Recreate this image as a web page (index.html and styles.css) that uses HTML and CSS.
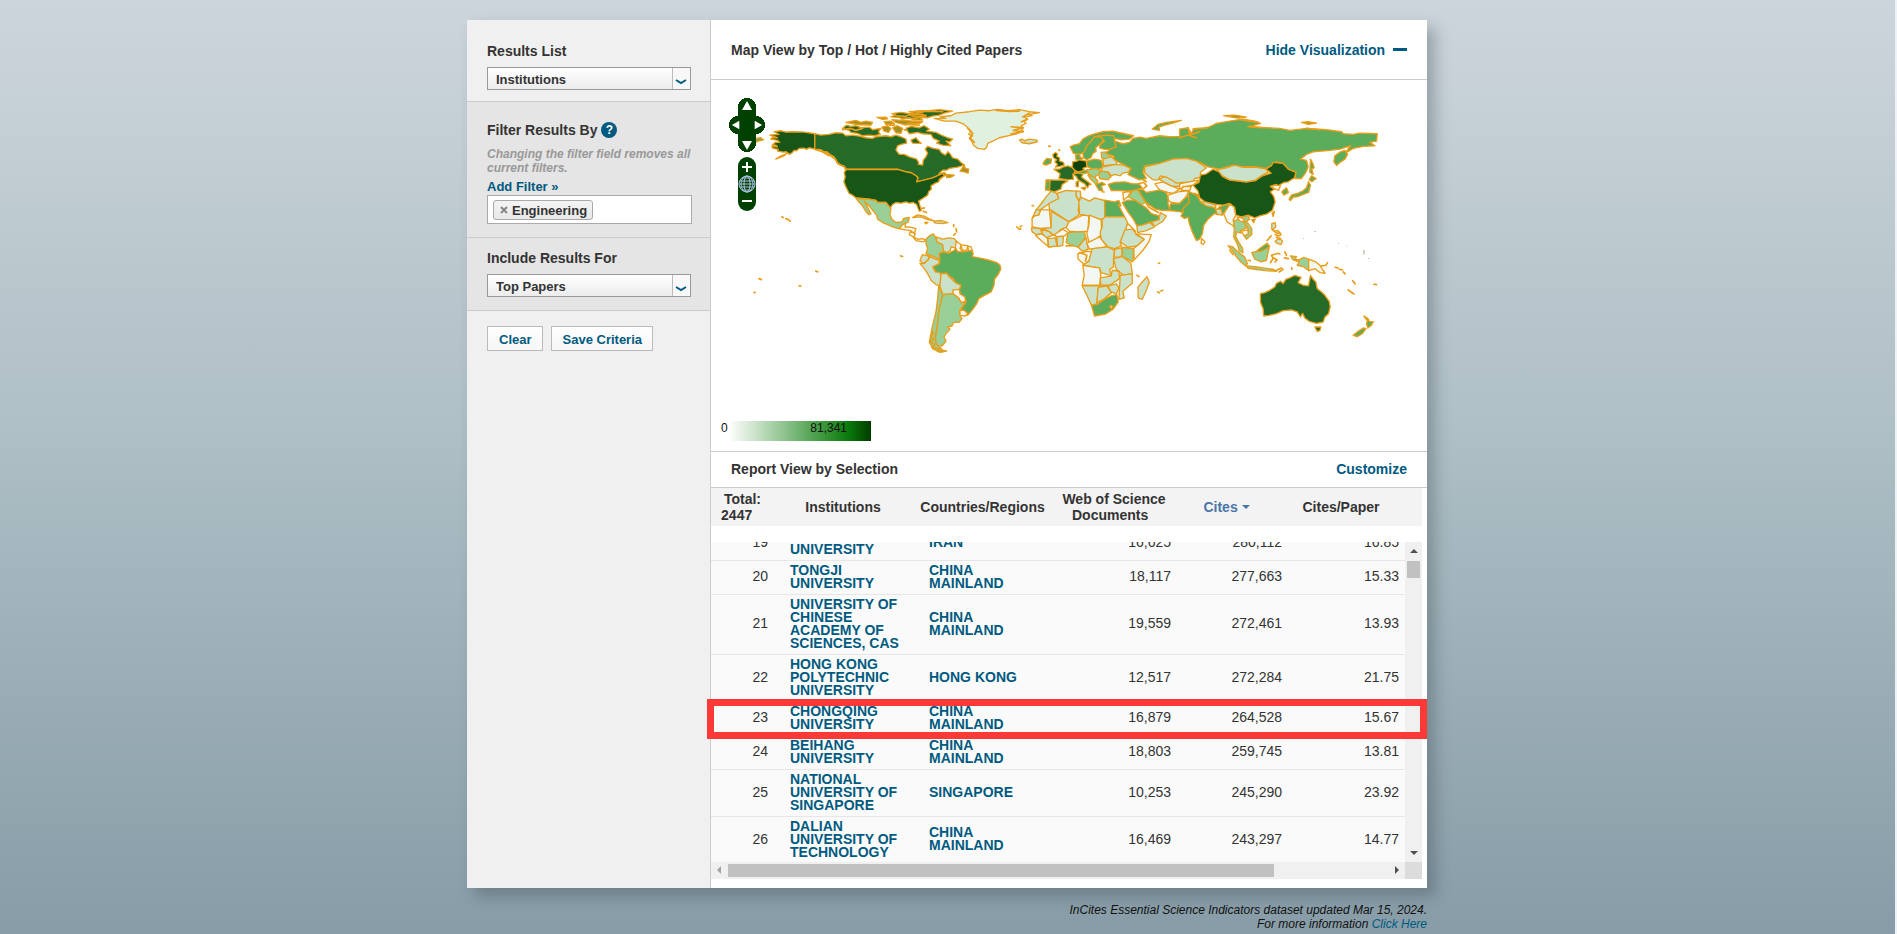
FILE: index.html
```html
<!DOCTYPE html>
<html lang="en">
<head>
  <meta charset="UTF-8">
  <title>InCites Essential Science Indicators</title>
  <link rel="stylesheet" href="styles.css">
</head>
<body>
  <div class="page">
    <div class="card">
      <aside class="sidebar">
        <section class="block first">
          <label for="resultsList">Results List</label>
          <div class="select">
            <select id="resultsList"><option>Institutions</option></select>
            <svg width="12" height="6" viewBox="0 0 12 6"><path d="M1 1 L6 4 L11 1" fill="none" stroke="#005a84" stroke-width="2"/></svg>
          </div>
        </section>

        <section class="block dark filter">
          <div class="title-row">
            <h2>Filter Results By</h2>
            <button class="help" aria-label="Help">?</button>
          </div>
          <p class="hint">Changing the filter field removes all current filters.</p>
          <a class="add" href="#">Add Filter »</a>
          <div class="tags">
            <span class="tag"><button aria-label="Remove Engineering"><svg width="8" height="8" viewBox="0 0 8 8"><path d="M1 1 L7 7 M7 1 L1 7" stroke="#888" stroke-width="2"/></svg></button>Engineering</span>
          </div>
        </section>

        <section class="block dark include">
          <label for="includeFor">Include Results For</label>
          <div class="select">
            <select id="includeFor"><option>Top Papers</option></select>
            <svg width="12" height="6" viewBox="0 0 12 6"><path d="M1 1 L6 4 L11 1" fill="none" stroke="#005a84" stroke-width="2"/></svg>
          </div>
        </section>

        <div class="actions">
          <button>Clear</button>
          <button>Save Criteria</button>
        </div>
      </aside>

      <main class="main">
        <header class="map-head">
          <h2>Map View by Top / Hot / Highly Cited Papers</h2>
          <a href="#">Hide Visualization <i></i></a>
        </header>

        <div class="map">
          <svg class="world" viewBox="6 -15 2145 1110" role="img" aria-label="World map of cited papers">
            <!-- americas -->
            <g>
              <path class="lv6" d="M182,150 L210,148 195,140 215,137 230,141 250,140 285,141 317,146 V192 L300,188 292,193 285,189 270,190 262,197 255,196 248,204 240,208 236,203 225,212 200,222 212,214 235,205 232,200 222,201 205,198 208,193 192,190 188,184 205,185 200,180 190,180 198,172 212,172 206,166 185,162 190,158 205,158Z"/>
              <path class="lv3" d="M142,160 155,158 163,164 150,167 140,172Z"/>
              <path class="lv5" d="M317,146 335,150 360,148 380,143 400,144 410,152 430,150 450,153 470,158 490,160 500,155 530,152 545,155 560,150 575,155 590,162 592,174 575,178 565,182 560,195 570,208 585,208 600,215 622,222 628,232 627,238 640,240 642,225 650,215 655,204 648,192 655,184 672,190 690,193 696,203 708,210 716,200 722,206 730,218 745,222 755,232 765,240 745,246 720,250 712,255 700,255 690,264 695,268 670,278 640,286 622,290 626,278 620,272 605,262 590,260 565,252 H412 L405,243 395,240 385,232 375,215 362,208 355,202 345,200 335,194 317,192Z"/>
              <path class="edge" d="M320,194 L340,200 352,200 365,212 378,222 385,235 405,245 412,258 M335,198 360,212"/>
              <path class="lv4" d="M752,258 L760,248 764,238 768,250 778,252 776,264 765,260Z M712,268 L735,270 725,276 712,277Z M688,268 L705,262 712,268 700,275 690,285Z"/>
              <path class="lv5" d="M400,130 L412,120 425,124 440,122 455,128 480,126 490,134 515,130 508,140 513,148 495,152 480,150 460,152 445,145 425,142 420,136Z"/>
              <path class="lv4" d="M410,112 L440,106 455,112 470,108 490,112 485,120 450,119 432,116Z M503,97 L530,96 535,101 520,103Z M525,110 L545,108 555,116 530,118Z M518,126 L535,122 545,130 538,142 525,138Z M550,128 L565,122 580,130 575,145 560,143Z"/>
              <path class="lv5" d="M545,95 L560,90 548,86 575,82 600,86 620,78 660,77 690,74 730,78 705,84 690,90 670,93 655,98 630,97 640,105 612,104 600,98 580,102 570,97Z"/>
              <path class="lv4" d="M548,104 L580,106 640,110 632,115 600,114 590,120 560,112Z M600,90 L640,88 650,92 620,96Z"/>
              <path class="edge" d="M560,92 L590,94 600,88 640,82 M575,100 L620,100 650,92 M600,80 L640,78 700,80 M400,134 L425,130 440,136 460,130 M540,120 L556,120 M590,118 L630,120 M585,134 L600,138"/>
              <path class="lv5" d="M590,130 L605,124 630,128 645,122 660,132 652,138 680,142 700,152 715,158 730,162 722,170 710,168 724,182 700,180 682,174 690,168 672,160 665,148 640,146 625,142 600,146Z M605,165 L620,158 628,168 636,175 610,174Z"/>
              <path class="ice" d="M675,100 L710,100 692,95 725,92 740,84 780,80 810,75 840,77 865,73 895,77 930,74 960,80 990,83 965,87 955,88 968,92 945,96 955,103 943,108 950,115 935,122 942,128 936,135 942,139 922,146 905,150 870,158 850,168 835,175 832,186 825,193 805,190 792,180 788,170 780,160 790,152 778,148 785,138 775,128 765,118 740,108 705,108Z"/>
              <path class="edge" d="M775,130 L790,145 782,158 795,172 M905,125 L940,128 912,136 942,140 905,146 M940,96 L960,84 M936,110 L950,104 M860,76 L900,79 930,78"/>
              <path class="lv1" d="M930,165 L938,162 945,167 960,162 982,165 984,170 960,176 938,173Z"/>
              <path class="lv6" d="M412,253 H565 L590,260 605,263 620,272 626,278 622,290 640,286 670,278 688,270 700,265 705,272 690,282 688,290 678,294 665,302 666,312 658,320 655,330 640,340 628,348 633,365 636,376 630,378 622,358 612,352 600,354 590,350 575,354 560,352 550,358 543,368 530,352 505,352 500,346 480,342 460,340 440,338 430,330 420,325 410,305 404,290 408,275 405,262Z"/>
              <path class="lv2" d="M440,338 L460,342 480,342 500,346 505,352 530,352 538,362 545,370 542,388 548,402 560,412 578,410 583,400 600,397 597,410 580,420 578,428 568,430 550,425 535,418 520,412 505,402 502,390 490,375 478,360 465,348 475,366 485,386 478,388 468,376 460,362 448,350Z"/>
              <path class="lv0" d="M580,418 L588,414 588,426 600,425 620,430 615,445 604,436 588,434 570,430Z M604,438 L618,445 614,456 600,448Z M612,456 L625,462 640,460 652,466 640,470 620,466Z"/>
              <path class="lv1" d="M610,397 L625,389 645,393 658,400 672,406 655,403 635,395Z M672,408 L695,406 716,412 700,415 678,414Z M646,412 L656,412 650,416Z"/>
              <path class="edge" d="M636,370 L645,368 M642,378 L652,382 M733,418 V424 M740,430 L742,440 M738,445 733,450"/>
              <path class="lv2" d="M650,462 L660,452 672,446 678,455 683,470 700,478 703,498 690,505 693,525 675,515 650,505 655,490 650,475Z"/>
              <path class="lv1" d="M680,455 L700,462 718,458 735,460 745,472 738,488 725,485 722,498 712,502 703,498 700,478 683,470Z"/>
              <path class="lv0" d="M740,468 L755,478 752,490 762,500 745,500 738,488Z M755,478 L775,482 772,496 758,494Z M775,482 L785,485 790,498 778,498Z"/>
              <path class="lv3" d="M692,525 L690,505 703,500 718,504 735,495 738,488 745,500 762,500 785,496 792,505 788,514 820,520 840,525 862,532 872,540 874,552 866,568 855,582 854,600 845,620 825,630 808,640 802,655 790,672 775,690 765,678 755,670 768,655 770,648 765,635 752,628 750,612 755,600 738,592 732,580 718,572 712,564 695,565 680,560 670,545 678,538 690,535Z"/>
              <path class="lv1" d="M640,508 L660,513 658,522 645,535 632,528 636,515Z"/>
              <path class="lv1" d="M660,513 L675,520 690,525 690,535 670,545 678,560 692,562 695,570 692,602 680,598 665,585 655,565 645,550 632,535 645,535 658,522Z"/>
              <path class="lv1" d="M695,565 L712,564 718,572 738,592 755,600 750,612 732,614 730,625 700,628 692,602Z"/>
              <path class="lv0" d="M732,614 L750,612 752,626 766,634 769,648 755,652 748,638 730,625Z"/>
              <path class="lv2" d="M700,628 L730,625 748,638 755,652 768,650 752,675 752,692 758,700 750,710 732,712 728,722 715,725 722,732 712,742 704,755 710,768 698,782 680,782 678,760 684,720 688,680 694,650Z"/>
              <path class="lv0" d="M752,675 L765,675 775,685 768,692 752,690Z"/>
              <path class="lv2" d="M688,603 L695,615 700,630 694,650 688,680 684,720 678,750 680,775 692,786 700,794 712,797 692,801 670,790 660,770 664,750 670,720 680,680 685,640Z"/>
              <path class="edge" d="M668,735 L672,745 664,752 674,762 662,768 676,778 670,786 690,790 684,796 700,798"/>
              <path class="edge" d="M218,395 L222,397 M230,400 L234,402 M236,402 L243,408 M574,512 L580,514 M150,580 L157,583 M320,557 L326,560 M270,602 H275 M135,621 L138,622 M922,425 L926,428 M932,425 L936,422 M928,432 934,431"/>
            </g>

            <!-- europe, africa, middle east -->
            <g transform="translate(870)">
              <path class="lv3" d="M212,185 L222,180 240,176 250,162 262,155 280,148 310,140 340,138 375,146 402,152 390,162 365,164 345,160 325,150 300,152 285,155 275,168 262,182 255,200 240,208 222,205Z"/>
              <path class="lv3" d="M250,205 L256,196 262,182 275,168 285,155 305,155 312,165 300,178 288,188 290,198 280,205 274,218 262,224 252,218Z"/>
              <path class="lv3" d="M300,153 L325,150 342,152 345,165 352,182 335,194 312,192 300,188 302,178 315,168 308,160Z"/>
              <path class="lv3" d="M228,210 L240,206 242,216 250,220 240,226 230,224Z"/>
              <path class="lv2" d="M305,202 L328,200 330,212 342,218 320,222 306,218Z"/>
              <path class="lv6" d="M160,208 L168,202 174,206 172,214 180,218 180,228 192,232 194,240 180,244 168,246 174,238 166,230 172,224 162,218Z"/>
              <path class="lv3" d="M135,228 L142,220 156,222 154,234 140,240 131,237Z"/>
              <path class="lv5" d="M163,252 L180,252 190,246 205,242 220,248 228,258 220,270 222,282 205,284 178,280 182,266Z"/>
              <path class="lv5" d="M140,284 L188,285 204,288 188,298 184,312 165,320 140,314 142,298Z"/>
              <path class="lv3" d="M140,286 L152,288 150,314 138,314Z"/>
              <path class="lv7" d="M220,230 L232,228 240,224 260,228 262,245 250,250 256,258 235,260 226,256 218,246Z"/>
              <path class="lv3" d="M262,228 L285,222 306,226 310,245 300,252 275,250 262,244Z"/>
              <path class="lv5" d="M220,266 L240,262 250,268 246,276 262,288 275,298 268,300 264,308 256,296 236,284 230,274Z M245,308 L258,306 256,314Z M230,290 L237,288 236,305 230,304Z"/>
              <path class="lv3" d="M225,260 L235,260 256,256 272,254 270,262 250,266 235,264Z"/>
              <path class="lv2" d="M262,254 L290,250 305,258 298,268 285,275 268,268Z M265,270 L285,275 295,288 290,298 272,280Z"/>
              <path class="lv2" d="M305,258 L325,260 334,275 325,284 300,280 298,268Z"/>
              <path class="lv3" d="M288,298 L308,292 318,298 305,302 310,318 298,315Z M306,320 L316,321"/>
              <path class="lv1" d="M310,222 L335,215 352,230 350,238 312,242Z"/>
              <path class="lv1" d="M310,245 L350,238 372,240 392,248 388,260 370,264 362,272 345,268 335,272 325,260 305,258Z"/>
              <path class="lv3" d="M326,298 L345,292 375,290 400,296 418,296 428,308 410,314 385,318 360,316 335,316Z"/>
              <path class="lv2" d="M385,334 L400,316 415,314 425,330 438,352 425,358 405,345Z"/>
              <path class="lv0" d="M370,322 L395,318 385,334 372,345Z"/>
              <path class="lv3" d="M415,312 L430,314 440,322 462,318 480,314 500,322 506,340 505,358 512,376 490,376 468,372 450,360 440,352 425,330Z"/>
              <path class="edge" d="M415,296 L432,292 442,302 430,312 M430,284 L440,290 M440,355 L448,366 465,376 476,382"/>
              <path class="lv3" d="M368,352 L385,345 405,345 425,358 440,368 455,385 478,392 478,404 450,412 428,420 412,422 400,400 385,380Z"/>
              <path class="lv1" d="M412,422 L428,420 450,412 460,415 464,426 440,436 414,442Z M450,412 L478,404 482,382 500,392 490,408 464,424Z"/>
              <path class="lv0" d="M466,296 L490,290 515,302 540,312 520,325 505,322 480,314Z"/>
              <path class="lv1" d="M478,282 L500,272 520,284 545,288 548,300 532,304 515,302 492,290Z"/>
              <path class="lv0" d="M505,330 L535,320 570,316 555,340 540,355 515,352 506,345Z"/>
              <path class="lv3" d="M510,376 L512,356 540,355 555,340 568,330 585,324 600,332 580,352 572,372 568,390 556,394 545,380Z"/>
              <path class="lv3" d="M458,132 L475,118 500,112 545,106 520,114 495,120 478,126 480,136Z"/>

              <path class="lv1" d="M155,318 L172,325 178,340 150,355 122,374 110,374 128,352 140,335Z"/>
              <path class="lv1" d="M98,400 L110,374 124,374 118,390 106,392Z"/>
              <path class="lv0" d="M98,400 L106,392 118,390 124,374 150,374 155,428 122,430 98,424Z"/>
              <path class="lv1" d="M172,325 L200,316 232,318 230,332 240,350 236,375 240,388 208,410 150,372 148,355 178,340Z"/>
              <path class="lv1" d="M230,318 L242,318 244,334 237,346 230,332Z"/>
              <path class="lv1" d="M244,336 L270,348 285,338 315,346 316,402 300,402 255,390 240,388 238,350Z"/>
              <path class="lv3" d="M316,345 L345,350 358,346 364,362 356,358 375,394 316,395Z"/>
              <path class="lv1" d="M155,378 L208,410 204,425 185,432 165,452 150,440 130,430 155,428Z"/>
              <path class="lv0" d="M208,410 L250,390 268,392 265,438 235,440 210,438 200,428Z"/>
              <path class="lv0" d="M270,390 L305,404 306,430 302,452 285,465 268,470 262,445 268,420Z"/>
              <path class="lv1" d="M316,395 L375,395 384,412 378,440 362,470 366,482 345,490 325,485 305,462 302,440 308,425 308,404Z"/>
              <path class="lv0" d="M384,414 L408,438 398,434 378,434Z"/>
              <path class="lv1" d="M376,434 L400,432 410,448 434,462 412,482 385,486 362,470Z"/>
              <path class="lv0" d="M410,446 L455,448 448,470 430,495 404,524 402,490 415,480 434,462Z"/>
              <path class="lv2" d="M205,442 L230,440 255,440 258,456 248,470 235,486 215,480 200,472Z"/>
              <path class="lv1" d="M96,428 L122,430 128,445 110,448 98,440Z M128,432 L150,440 160,450 140,458 128,445Z M145,460 L168,458 172,482 148,486Z M172,454 L192,454 190,480 174,484Z"/>
              <path class="lv0" d="M108,450 L128,446 144,460 146,484 125,466Z M165,448 L190,432 206,442 195,452 170,454Z"/>
              <path class="lv1" d="M236,486 L250,468 260,458 266,492 248,498Z"/>
              <path class="lv0" d="M262,474 L300,455 322,484 300,488 270,492Z"/>
              <path class="lv0" d="M235,506 L262,498 276,500 270,525 255,538 236,522Z"/>
              <path class="edge" d="M240,502 L262,510 258,528 M200,482 L222,481"/>
              <path class="lv1" d="M278,490 L325,485 345,496 342,520 342,545 330,552 335,572 305,562 300,548 278,545 250,540 268,528Z"/>
              <path class="lv1" d="M345,492 L366,488 368,508 362,516 344,515Z"/>
              <path class="lv2" d="M368,486 L402,490 400,530 368,514Z"/>
              <path class="lv1" d="M342,520 L368,514 394,534 398,566 372,570 350,552Z"/>
              <path class="lv0" d="M250,540 L278,545 300,548 304,570 300,600 248,600 254,570Z"/>
              <path class="lv1" d="M302,578 L335,572 338,555 358,558 360,580 330,600 304,600Z"/>
              <path class="lv1" d="M362,570 L398,566 398,594 370,618 374,638 358,642 360,604Z"/>
              <path class="lv1" d="M326,602 L350,596 358,608 350,626 332,618Z"/>
              <path class="lv1" d="M248,602 L310,602 296,608 292,656 276,660 262,630Z"/>
              <path class="lv1" d="M296,606 L322,602 336,622 312,642 292,652Z"/>
              <path class="lv3" d="M276,660 L292,658 310,645 334,632 352,628 356,650 340,672 318,686 285,692Z"/>
              <path class="lv0" d="M330,664 L336,660 340,666 334,670Z"/>
              <path class="lv1" d="M415,606 L428,590 442,574 449,592 438,620 428,642 416,638Z"/>
              <path class="edge" d="M412,570 L418,574 M474,620 L479,622 M484,617 L489,615 M98,361 L102,362 M148,183 L152,184 M178,194 L180,196 M476,534 H480"/>
            </g>

            <!-- asia, oceania -->
            <g transform="translate(1410)">
              <path class="lv3" d="M-195,168 L-170,176 -150,172 -140,160 -120,156 -100,160 -60,152 -30,155 0,154 0,132 25,128 30,150 45,130 70,130 90,125 110,115 150,108 190,102 225,108 242,115 210,125 260,128 300,130 330,136 380,130 440,134 485,140 490,146 520,148 540,144 592,146 590,168 570,172 585,182 550,184 520,190 495,205 512,182 480,192 450,196 400,200 380,208 362,222 380,226 385,245 378,262 365,280 345,280 348,262 325,252 310,235 290,230 275,242 258,250 230,245 190,245 160,240 120,252 85,245 60,232 20,220 -20,222 -60,235 -105,242 -110,262 -100,280 -120,284 -140,275 -155,268 -146,250 -175,235 -195,225 -198,212 -222,205 -205,190 -190,186Z"/>
              <path class="edge" d="M0,158 L25,150 50,158 M25,128 L35,148 60,140 M40,132 L85,128 M180,104 L235,112 M205,124 L245,128 M380,130 L420,134"/>
              <path class="lv3" d="M465,212 L482,200 495,196 503,208 495,222 480,232 470,241 462,230Z"/>
              <path class="lv4" d="M132,92 L165,90 200,96 175,99 150,95Z M365,112 L385,110 410,114 385,118Z"/>
              <path class="lv1" d="M-105,245 L-60,235 -20,222 20,220 50,228 62,236 80,248 62,262 66,276 45,280 40,290 10,292 -10,294 -25,284 -40,276 -58,272 -64,284 -80,284 -95,272 -105,262Z"/>
              <path class="lv0" d="M0,296 L40,288 62,284 40,300 15,304 0,312Z M10,304 L35,304 30,316 5,316Z"/>
              <path class="lv1" d="M110,254 L140,248 165,240 190,247 230,247 262,252 264,262 245,272 225,286 200,290 150,284 128,272Z"/>
              <path class="lv6" d="M40,300 L58,292 62,270 80,266 100,252 118,260 128,274 150,285 200,291 228,286 248,272 274,264 258,252 275,242 280,232 310,235 325,252 348,262 344,278 325,290 312,292 295,302 288,298 272,304 284,312 272,320 282,334 286,350 278,375 262,386 240,392 225,398 205,390 185,395 168,390 165,368 150,355 130,360 110,358 75,350 60,338 55,318Z"/>
              <path class="lv4" d="M216,404 L226,402 222,412Z M277,384 L284,378 280,394Z"/>
              <path class="lv0" d="M272,304 L290,300 302,302 296,316Z"/>
              <path class="lv3" d="M306,320 L320,308 326,322 312,330Z"/>
              <path class="lv3" d="M328,342 L335,330 355,324 368,318 380,308 386,290 392,300 386,322 370,328 355,334 340,336 332,346Z M388,284 L395,272 409,280 396,290Z M392,222 L399,235 403,248 396,252 400,268 390,262Z"/>
              <path class="lv3" d="M25,318 L50,330 62,348 75,358 105,368 110,376 118,366 138,358 154,358 140,372 130,388 112,388 105,384 85,402 72,420 68,445 60,462 50,466 38,440 28,412 26,396 14,400 4,392 12,380 8,372 28,352Z"/>
              <path class="lv1" d="M62,350 L75,350 108,360 108,368 80,362Z M108,372 L124,372 128,390 112,386Z"/>
              <path class="lv0" d="M66,460 L76,470 70,478 64,474Z"/>
              <path class="lv0" d="M132,386 L150,358 163,365 168,392 160,405 166,430 158,420 142,410Z"/>
              <path class="lv2" d="M162,408 L175,402 195,412 200,428 182,436 184,444 170,440 168,455 180,476 188,488 190,502 178,496 174,480 162,455 164,430Z"/>
              <path class="lv2" d="M186,396 L205,392 210,402 200,408 216,430 216,448 200,462 192,450 208,440 202,424 190,408Z"/>
              <path class="lv0" d="M184,438 L204,434 206,446 194,452Z M172,396 L188,398 196,410 180,408Z"/>
              <path class="lv2" d="M145,482 L158,484 175,500 195,515 203,535 198,542 185,532 170,515 158,496Z"/>
              <path class="lv2" d="M200,542 L225,544 250,548 280,552 290,558 255,556 205,549Z"/>
              <path class="lv2" d="M216,502 L235,498 248,490 268,488 264,505 260,525 245,530 225,522Z"/>
              <path class="lv3" d="M232,496 L248,484 262,474 270,484 255,492 240,500Z"/>
              <path class="lv1" d="M276,415 L286,412 288,425 280,432 284,438 294,436 302,444 292,444 284,440 276,432Z M286,468 L300,458 308,468 304,478 290,474Z"/>
              <path class="edge" d="M262,466 L274,452 M286,448 L296,452 304,448 M290,456 L300,462 M275,510 L295,504 300,506 M276,512 L280,520 272,532 M282,518 L292,524 286,530 M315,500 L320,510 M314,518 L326,520 M298,560 L310,552 M305,548 L290,555 M336,548 V552 M150,495 L160,508 M205,525 L212,526"/>
              <path class="lv2" d="M332,512 L350,514 345,522 358,524 372,516 386,522 387,556 372,545 352,540 358,530 340,524Z"/>
              <path class="lv0" d="M386,522 L408,530 420,540 436,564 420,562 405,550 387,556Z"/>
              <path class="edge" d="M424,542 L438,540 443,532 M466,546 L474,548 M478,552 L488,554 M490,560 L496,566 M518,586 L526,596 M505,614 L522,626 M582,597 L590,598"/>
              <path class="speck" d="M370,460 H372 M404,438 L408,440 M476,474 V476 M500,482 H502 M552,494 V508 M565,520 H568"/>
              <path class="lv5" d="M242,625 L255,622 270,615 285,605 290,594 302,588 310,595 318,582 330,578 345,570 364,576 355,592 370,600 386,602 392,570 400,582 408,590 412,610 425,620 435,630 448,648 451,665 446,685 435,695 430,710 410,714 388,708 375,698 368,684 362,695 352,680 335,674 310,676 290,685 268,690 252,692 250,670 242,650Z"/>
              <path class="lv5" d="M405,725 L423,725 420,736 412,738Z"/>
              <path class="lv3" d="M552,692 L564,700 568,708 580,710 574,720 564,728 560,716 562,706Z M520,750 L535,738 550,728 558,730 548,744 532,754Z"/>
            </g>
          </svg>

          <div class="controls">
            <div class="pan">
              <button class="up" aria-label="Pan up"><svg viewBox="0 0 12 12"><path d="M6 1 L11 10 H1Z"/></svg></button>
              <button class="left" aria-label="Pan left"><svg viewBox="0 0 12 12"><path d="M1 6 L10 1 V11Z"/></svg></button>
              <button class="right" aria-label="Pan right"><svg viewBox="0 0 12 12"><path d="M11 6 L2 1 V11Z"/></svg></button>
              <button class="down" aria-label="Pan down"><svg viewBox="0 0 12 12"><path d="M6 11 L11 2 H1Z"/></svg></button>
            </div>
            <div class="zoom">
              <button aria-label="Zoom in"><svg viewBox="0 0 18 18"><path d="M8 5 H10 V9 H14 V11 H10 V15 H8 V11 H4 V9 H8Z"/></svg></button>
              <button aria-label="Whole world"><svg viewBox="0 0 18 18"><g fill="none" stroke="#a9bfe0"><circle cx="9" cy="9" r="8"/><ellipse cx="9" cy="9" rx="3" ry="8"/><ellipse cx="9" cy="9" rx="6" ry="8"/><path d="M1 9 H17 M2 6 H16 M2 12 H16 M4 3 H14 M4 15 H14"/></g></svg></button>
              <button aria-label="Zoom out"><svg viewBox="0 0 18 18"><path d="M4 7 H14 V9 H4Z"/></svg></button>
            </div>
          </div>

          <div class="legend"><span>0</span><span>81,341</span></div>
        </div>

        <header class="report-head">
          <h2>Report View by Selection</h2>
          <a href="#">Customize</a>
        </header>

        <div class="report">
          <table class="heads">
            <colgroup><col class="h1"><col class="h2"><col class="h3"><col class="h4"><col class="h5"><col class="h6"><col></colgroup>
            <thead>
              <tr>
                <th>Total: 2447&nbsp;&nbsp;&nbsp;</th>
                <th>Institutions</th>
                <th>Countries/Regions</th>
                <th>Web of Science Documents&nbsp;&nbsp;</th>
                <th class="sorted"><a href="#">Cites <i></i></a></th>
                <th>Cites/Paper</th>
                <td></td>
              </tr>
            </thead>
          </table>

          <div class="scroller">
            <div class="rows">
              <table class="data">
                <colgroup><col class="c1"><col class="c2"><col class="c3"><col class="c4"><col class="c5"><col></colgroup>
                <tbody>
                  <tr><td>19</td><td><a href="#">ISLAMIC AZAD UNIVERSITY</a></td><td><a href="#">IRAN</a></td><td>16,625</td><td>280,112</td><td>16.85</td></tr>
                  <tr><td>20</td><td><a href="#">TONGJI UNIVERSITY</a></td><td><a href="#">CHINA MAINLAND</a></td><td>18,117</td><td>277,663</td><td>15.33</td></tr>
                  <tr><td>21</td><td><a href="#">UNIVERSITY OF CHINESE ACADEMY OF SCIENCES, CAS</a></td><td><a href="#">CHINA MAINLAND</a></td><td>19,559</td><td>272,461</td><td>13.93</td></tr>
                  <tr><td>22</td><td><a href="#">HONG KONG POLYTECHNIC UNIVERSITY</a></td><td><a href="#">HONG KONG</a></td><td>12,517</td><td>272,284</td><td>21.75</td></tr>
                  <tr><td>23</td><td><a href="#">CHONGQING UNIVERSITY</a></td><td><a href="#">CHINA MAINLAND</a></td><td>16,879</td><td>264,528</td><td>15.67</td></tr>
                  <tr><td>24</td><td><a href="#">BEIHANG UNIVERSITY</a></td><td><a href="#">CHINA MAINLAND</a></td><td>18,803</td><td>259,745</td><td>13.81</td></tr>
                  <tr><td>25</td><td><a href="#">NATIONAL UNIVERSITY OF SINGAPORE</a></td><td><a href="#">SINGAPORE</a></td><td>10,253</td><td>245,290</td><td>23.92</td></tr>
                  <tr><td>26</td><td><a href="#">DALIAN UNIVERSITY OF TECHNOLOGY</a></td><td><a href="#">CHINA MAINLAND</a></td><td>16,469</td><td>243,297</td><td>14.77</td></tr>
                </tbody>
              </table>
            </div>
            <div class="vbar"><i class="arrow-up"></i><b></b><i class="arrow-down"></i></div>
            <div class="hbar"><i class="arrow-left"></i><b></b><i class="arrow-right"></i></div>
            <div class="corner"></div>
          </div>

          <div class="highlight"></div>
        </div>
      </main>
    </div>

    <footer>
      InCites Essential Science Indicators dataset updated Mar 15, 2024.<br>
      For more information <a href="#">Click Here</a>
    </footer>
  </div>
</body>
</html>
```
FILE: styles.css
```css
* {
  box-sizing: border-box;
}

html {
  background: #eff2f5;
}

body {
  margin: 0 2px 0 0;
  padding: 20px 1px 4px 0;
  min-height: 100vh;
  font-family: Arial, "Liberation Sans", sans-serif;
  font-size: 14px;
  color: #333;
  background: linear-gradient(#cdd5dc, #afc0c6 45%, #879ca7);
}

a {
  color: #005a7f;
  text-decoration: none;
}

h2 {
  margin: 0;
  font-size: 14px;
  line-height: 16px;
}

button {
  font-family: inherit;
  padding: 0;
  border: 0;
  background: none;
  cursor: pointer;
}

.page {
  max-width: 960px;
  margin: 0 auto;
}

.card {
  display: flex;
  background: #fff;
  box-shadow: 8px 8px 14px rgba(40, 50, 55, 0.3);
}

/* sidebar */
.sidebar {
  flex: 0 0 244px;
  background: #f0f0f0;
  border-right: 1px solid #ccc;
}

.block {
  padding: 0 18px 0 20px;
  border-bottom: 1px solid #ccc;
}

.block.first {
  padding-top: 23px;
  padding-bottom: 11px;
}

.block.dark {
  background: #e5e5e5;
}

.block.filter {
  padding-top: 20px;
  padding-bottom: 13px;
}

.block.include {
  padding-top: 12px;
  padding-bottom: 13px;
}

.block label {
  display: block;
  font-weight: bold;
  line-height: 16px;
  margin-bottom: 8px;
}

.select {
  position: relative;
}

.select select {
  appearance: none;
  display: block;
  width: 204px;
  height: 23px;
  padding: 1px 8px 0;
  border: 1px solid #999;
  border-radius: 0;
  background: linear-gradient(90deg, transparent 184px, #bbb 184px, #bbb 185px, #f8f8f8 185px), linear-gradient(#fff, #ececec);
  font: bold 13px Arial, "Liberation Sans", sans-serif;
  color: #333;
}

.select svg {
  position: absolute;
  left: 188px;
  top: 12px;
  pointer-events: none;
}

.title-row {
  display: flex;
  align-items: center;
  gap: 4px;
}

.help {
  width: 16px;
  height: 16px;
  border-radius: 50%;
  background: #005a7f;
  color: #fff;
  font-size: 12px;
  font-weight: bold;
  line-height: 16px;
}

.hint {
  margin: 9px 0 4px;
  font-size: 12px;
  font-weight: bold;
  font-style: italic;
  line-height: 14px;
  color: #999;
}

.add {
  display: block;
  font-size: 13px;
  font-weight: bold;
  line-height: 16px;
}

.tags {
  width: 205px;
  height: 29px;
  padding: 4px 5px;
  border: 1px solid #aaa;
  background: #fff;
}

.tag {
  display: inline-flex;
  align-items: center;
  height: 20px;
  padding: 0 5px 0 6px;
  border: 1px solid #aaa;
  border-radius: 3px;
  background: linear-gradient(#f4f4f4, #e8e8e8);
  font-size: 13px;
  font-weight: bold;
}

.tag button {
  display: flex;
  margin-right: 4px;
}

.actions {
  display: flex;
  gap: 8px;
  padding: 15px 20px;
}

.actions button {
  height: 25px;
  padding: 1px 10px 0 11px;
  border: 1px solid #bbb;
  background: linear-gradient(#fff, #f6f6f6);
  color: #005a7f;
  font-size: 13px;
  font-weight: bold;
}

/* map */
.main {
  flex: 1;
  min-width: 0;
  padding-bottom: 9px;
}

.map-head,
.report-head {
  display: flex;
  justify-content: space-between;
  align-items: center;
  padding: 0 20px;
  border-bottom: 1px solid #ccc;
  font-weight: bold;
}

.map-head {
  height: 60px;
}

.map-head i {
  display: inline-block;
  width: 14px;
  height: 3px;
  margin-left: 4px;
  vertical-align: 4px;
  background: #005a7f;
}

.map {
  position: relative;
  border-bottom: 1px solid #ccc;
}

.world {
  display: block;
  width: 100%;
}

.world path {
  stroke: #e99d18;
  stroke-width: 4;
  stroke-linejoin: round;
}

.world .edge { fill: none; stroke-width: 5; stroke-linecap: round; }
.world .speck { fill: none; stroke: #a8b080; stroke-width: 3; }
.world .ice { fill: #e0f1e0; }
.world .lv0 { fill: #f4f8f4; }
.world .lv1 { fill: #c9e2c9; }
.world .lv2 { fill: #98d098; }
.world .lv3 { fill: #5bac5b; }
.world .lv4 { fill: #a09025; }
.world .lv5 { fill: #256a26; }
.world .lv6 { fill: #185617; }
.world .lv7 { fill: #0b440b; }

.controls {
  position: absolute;
  left: 18px;
  top: 18px;
  width: 36px;
}

.controls svg {
  display: block;
  width: 100%;
  fill: #fff;
}

.pan {
  display: grid;
  grid-template: 12px 30px 12px / 12px 12px 12px;
  align-items: center;
  background:
    radial-gradient(circle at 9px 9px, #004000 9px, transparent 9px) 9px 0 / 18px 18px no-repeat,
    radial-gradient(circle at 9px 9px, #004000 9px, transparent 9px) 9px 36px / 18px 18px no-repeat,
    radial-gradient(circle at 9px 9px, #004000 9px, transparent 9px) 0 18px / 18px 18px no-repeat,
    radial-gradient(circle at 9px 9px, #004000 9px, transparent 9px) 18px 18px / 18px 18px no-repeat,
    linear-gradient(#004000, #004000) 9px 9px / 18px 36px no-repeat;
}

.pan .up { grid-area: 1 / 2; padding-top: 3px; }
.pan .left { grid-area: 2 / 1; padding-left: 2px; }
.pan .right { grid-area: 2 / 3; padding-right: 2px; }
.pan .down { grid-area: 3 / 2; padding-bottom: 3px; }

.zoom {
  width: 18px;
  margin: 5px auto 0;
  border-radius: 9px;
  background: #004000;
}

.zoom button {
  display: block;
  width: 18px;
  height: 18px;
}

.legend {
  position: absolute;
  left: 10px;
  bottom: 10px;
  display: flex;
  justify-content: space-between;
  width: 150px;
  height: 20px;
  padding-right: 24px;
  background: linear-gradient(90deg, #fff 5%, #c4dfc4 25%, #4fa24f 62%, #0a790a 85%, #003c00);
  font-size: 12px;
  line-height: 14px;
  color: #111;
}

/* report */
.report-head {
  height: 36px;
}

.report {
  position: relative;
  padding-right: 5px;
}

table {
  width: 100%;
  table-layout: fixed;
  border-collapse: collapse;
}

.heads {
  margin-bottom: 16px;
  background: #f3f3f3;
}

.h1 { width: 63px; }
.h2 { width: 138px; }
.h3 { width: 141px; }
.h4 { width: 122px; }
.h5 { width: 103px; }
.h6 { width: 126px; }

.heads th {
  height: 38px;
  padding: 0 4px;
  line-height: 16px;
}

.sorted a {
  color: #4a76a8;
}

.sorted i {
  display: inline-block;
  vertical-align: 3px;
  border: 4px solid transparent;
  border-top-color: #4a76a8;
  border-bottom: 0;
}

.scroller {
  display: grid;
  grid-template-columns: 1fr 17px;
  grid-template-rows: 320px 17px;
}

/* scrolled part way down the list */
.rows {
  display: flex;
  flex-direction: column;
  justify-content: flex-end;
  overflow: hidden;
}

.c1 { width: 68px; }
.c2 { width: 139px; }
.c3 { width: 126px; }
.c4 { width: 138px; }
.c5 { width: 111px; }

.data {
  margin-bottom: -2px;
}

.data td {
  padding: 3px 11px 4px;
  border-bottom: 1px solid #e6e6e6;
  background: #fafafa;
  line-height: 13px;
  text-align: right;
}

.data td:nth-child(2),
.data td:nth-child(3) {
  text-align: left;
  font-weight: bold;
}

.data td:last-child {
  padding-right: 6px;
}

.vbar,
.hbar {
  display: flex;
  justify-content: space-between;
  align-items: center;
  background: #f0f0f0;
}

.vbar {
  flex-direction: column;
  padding: 7px 2px;
}

.vbar b {
  width: 13px;
  height: 17px;
  margin: 8px 0 auto;
  background: #c1c1c1;
}

.hbar {
  padding: 0 6px;
}

.hbar b {
  width: 80%;
  height: 13px;
  margin: 0 auto 0 7px;
  background: #c1c1c1;
}

.vbar i,
.hbar i {
  border: 4px solid transparent;
}

.vbar .arrow-up { border-bottom-color: #505050; border-top: 0; }
.vbar .arrow-down { border-top-color: #505050; border-bottom: 0; }
.hbar .arrow-left { border-right-color: #a3a3a3; border-left: 0; }
.hbar .arrow-right { border-left-color: #505050; border-right: 0; }

.corner {
  background: #dcdcdc;
}

/* red frame round one row */
.highlight {
  position: absolute;
  left: -4px;
  right: 0;
  bottom: 140px;
  height: 40px;
  border: 7px solid #fb3a37;
  pointer-events: none;
}

footer {
  padding-top: 15px;
  font-size: 12px;
  font-style: italic;
  line-height: 14px;
  text-align: right;
  color: #111;
}
```
